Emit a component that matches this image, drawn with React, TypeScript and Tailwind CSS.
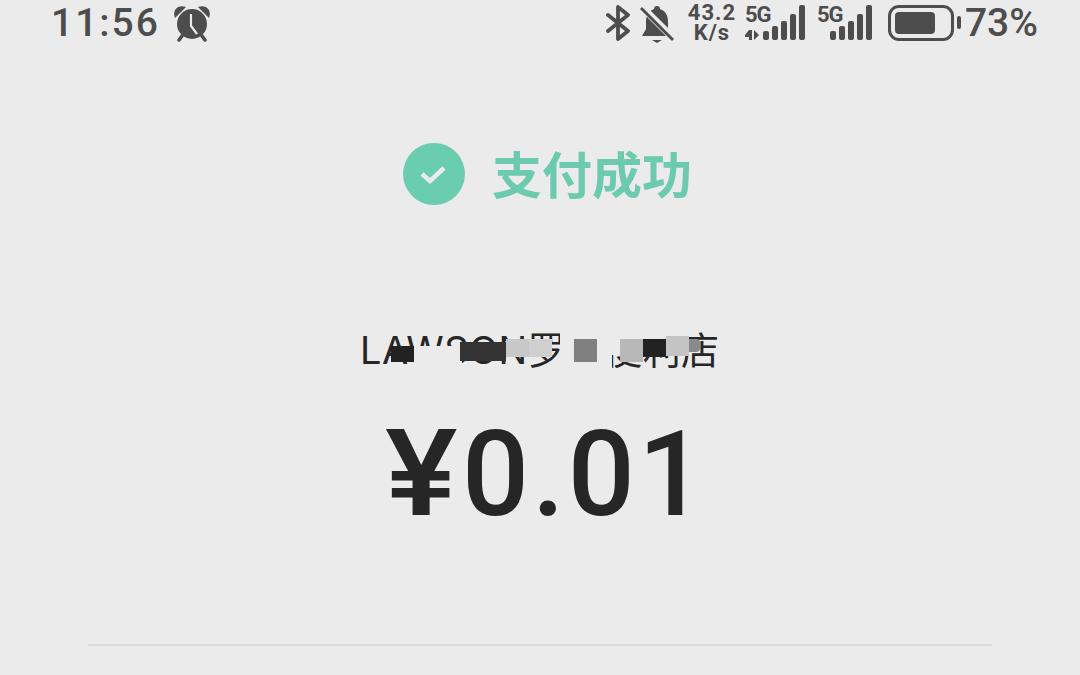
const INK = "text-[#4d4d4d]";

const Alarm = () => (
  <svg width="38" height="38" viewBox="0 0 38 38" className={INK}>
    <path d="M2 14 C-1 6 5 0 13 3 Z M36 14 C39 6 33 0 25 3 Z" fill="currentColor" />
    <circle cx="19" cy="20" r="15" fill="currentColor" />
    <path d="M18 10 V22 L24 30" fill="none" stroke="#ebebeb" strokeWidth="2.2" />
    <path d="M9 32 L6 36 M29 32 L32 36" stroke="currentColor" strokeWidth="3.6" strokeLinecap="round" />
  </svg>
);

const Bluetooth = () => (
  <svg width="25" height="36" viewBox="0 0 25 36" className={INK}>
    <path d="M2 10 L22 26 L12 34 V2 L22 10 L2 26" fill="none" stroke="currentColor" strokeWidth="3.8" strokeLinejoin="round" strokeLinecap="round" />
  </svg>
);

const BellOff = () => (
  <svg width="34" height="38" viewBox="0 0 34 38" className={INK}>
    <path d="M17 1 C19 1 20 2 20 4 C26 6 28 11 28 17 V24 L32 31 H2 L6 24 V17 C6 11 8 6 14 4 C14 2 15 1 17 1 Z M12 35 H22 L17 38 Z" fill="currentColor" />
    <path d="M1 1 L33 33" stroke="#ebebeb" strokeWidth="7" />
    <path d="M1 3 L33 35" stroke="currentColor" strokeWidth="2.8" />
  </svg>
);

const SIGNAL = [9, 14, 19, 26, 35];

const Signal = ({ arrows, width }: { arrows?: boolean; width: string }) => (
  <div className={`relative flex items-end justify-end gap-[3px] h-[35px] ${width}`}>
    <div className="absolute left-0 top-[-2px] text-[22px] leading-[24px] font-bold tracking-[-1px]">5G</div>
    {arrows && (
      <svg width="17" height="10" viewBox="0 0 17 10" className="absolute left-0 bottom-0">
        <path d="M0 5 L4 0 H7 V10 H4 V7 H0 Z M9 0 L14 5 L9 10 Z" fill="#4d4d4d" />
      </svg>
    )}
    {SIGNAL.map((h, i) => (
      <div key={i} className="w-[6px] rounded-[2px] bg-[#4d4d4d]" style={{ height: h }} />
    ))}
  </div>
);

const Battery = () => (
  <div className="flex items-center gap-[3px]">
    <div className="w-[66px] h-[36px] rounded-[11px] border-[3px] border-[#4d4d4d] p-[4px]">
      <div className="w-[40px] h-full rounded-[4px] bg-[#4d4d4d]" />
    </div>
    <div className="w-[4px] h-[13px] rounded-[2px] bg-[#4d4d4d]" />
  </div>
);

export default function App() {
  return (
    <div className="w-[1080px] h-[675px] overflow-hidden bg-[#ebebeb] flex flex-col font-['Roboto','Noto_Sans_CJK_SC',sans-serif]">
      {/* status bar */}
      <div className={`flex items-center justify-between h-[45px] pl-[51px] pr-[42px] ${INK}`}>
        <div className="flex items-center gap-[13px]">
          <span className="text-[39px] leading-[45px] pt-[2px] font-medium tracking-[2px]">11:56</span>
          <Alarm />
        </div>
        <div className="flex items-center">
          <Bluetooth />
          <div className="ml-[9px] mt-[2px]"><BellOff /></div>
          <div className="ml-[13px] flex flex-col items-center text-[22px] leading-[20px] font-bold tracking-[1px] w-[50px]">
            <span>43.2</span>
            <span>K/s</span>
          </div>
          <div className="ml-[8px]"><Signal arrows width="w-[60px]" /></div>
          <div className="ml-[12px]"><Signal width="w-[55px]" /></div>
          <div className="ml-[16px]"><Battery /></div>
          <span className="ml-[4px] text-[39px] leading-[45px] pt-[2px] font-medium">73%</span>
        </div>
      </div>

      {/* result */}
      <div className="mt-[98px] ml-[403px] h-[62px] flex items-center gap-[27px]">
        <div className="w-[62px] h-[62px] rounded-full bg-[#6acdae] flex items-center justify-center">
          <svg width="30" height="24" viewBox="0 0 30 24">
            <path d="M3 12 L11 19 L25 6" fill="none" stroke="#ebebeb" strokeWidth="4.5" />
          </svg>
        </div>
        <span className="text-[50px] leading-[62px] pt-[6px] font-bold text-[#6ccbae]">支付成功</span>
      </div>

      {/* merchant, with the mosaic that hides part of the name */}
      <div className="relative mt-[123px] w-[356px] h-[44px] self-center text-[38px] leading-[44px] text-[#262626] whitespace-nowrap font-['Inter','Noto_Sans_CJK_SC',sans-serif]">
        <span className="inline-block -ml-[2px] tracking-[0.4px]">LAWSON罗森便利店</span>
        <div className="absolute left-[52px] top-[18px] w-[48px] h-[20px] bg-[#ebebeb]" />
        <div className="absolute left-[198px] top-0 w-[52px] h-[44px] bg-[#ebebeb]" />
        <div className="absolute left-[250px] top-0 w-[70px] h-[11px] bg-[#ebebeb]" />
        <div className="absolute left-[235px] top-[11px] w-[23px] h-[16px] bg-[#ebebeb]" />
        <div className="absolute left-[29px] top-[18px] w-[23px] h-[16px] bg-[#222222]" />
        <div className="absolute left-[98px] top-[14px] w-[46px] h-[19px] bg-[#333333]" />
        <div className="absolute left-[144px] top-[11px] w-[23px] h-[18px] bg-[#c8c8c8]" />
        <div className="absolute left-[167px] top-[11px] w-[23px] h-[18px] bg-[#cfcfcf]" />
        <div className="absolute left-[212px] top-[11px] w-[23px] h-[23px] bg-[#808080]" />
        <div className="absolute left-[258px] top-[11px] w-[23px] h-[23px] bg-[#b8b8b8]" />
        <div className="absolute left-[281px] top-[11px] w-[23px] h-[18px] bg-[#222222]" />
        <div className="absolute left-[304px] top-[8px] w-[23px] h-[20px] bg-[#c4c4c4]" />
        <div className="absolute left-[327px] top-[11px] w-[11px] h-[13px] rounded-r-[4px] bg-[#8a8a8a]" />
      </div>

      {/* amount */}
      <div className="mt-[35px] ml-[384px] flex items-baseline text-[118px] leading-[130px] font-medium text-[#262626]">
        <span className="font-['Inter',sans-serif] font-semibold w-[78px] origin-left scale-x-[1.12]">¥</span>
        <span className="tracking-[3px]">0.01</span>
      </div>

      <div className="mt-[104px] mx-[88px] h-[2px] bg-[#dcdcdc]" />
    </div>
  );
}
